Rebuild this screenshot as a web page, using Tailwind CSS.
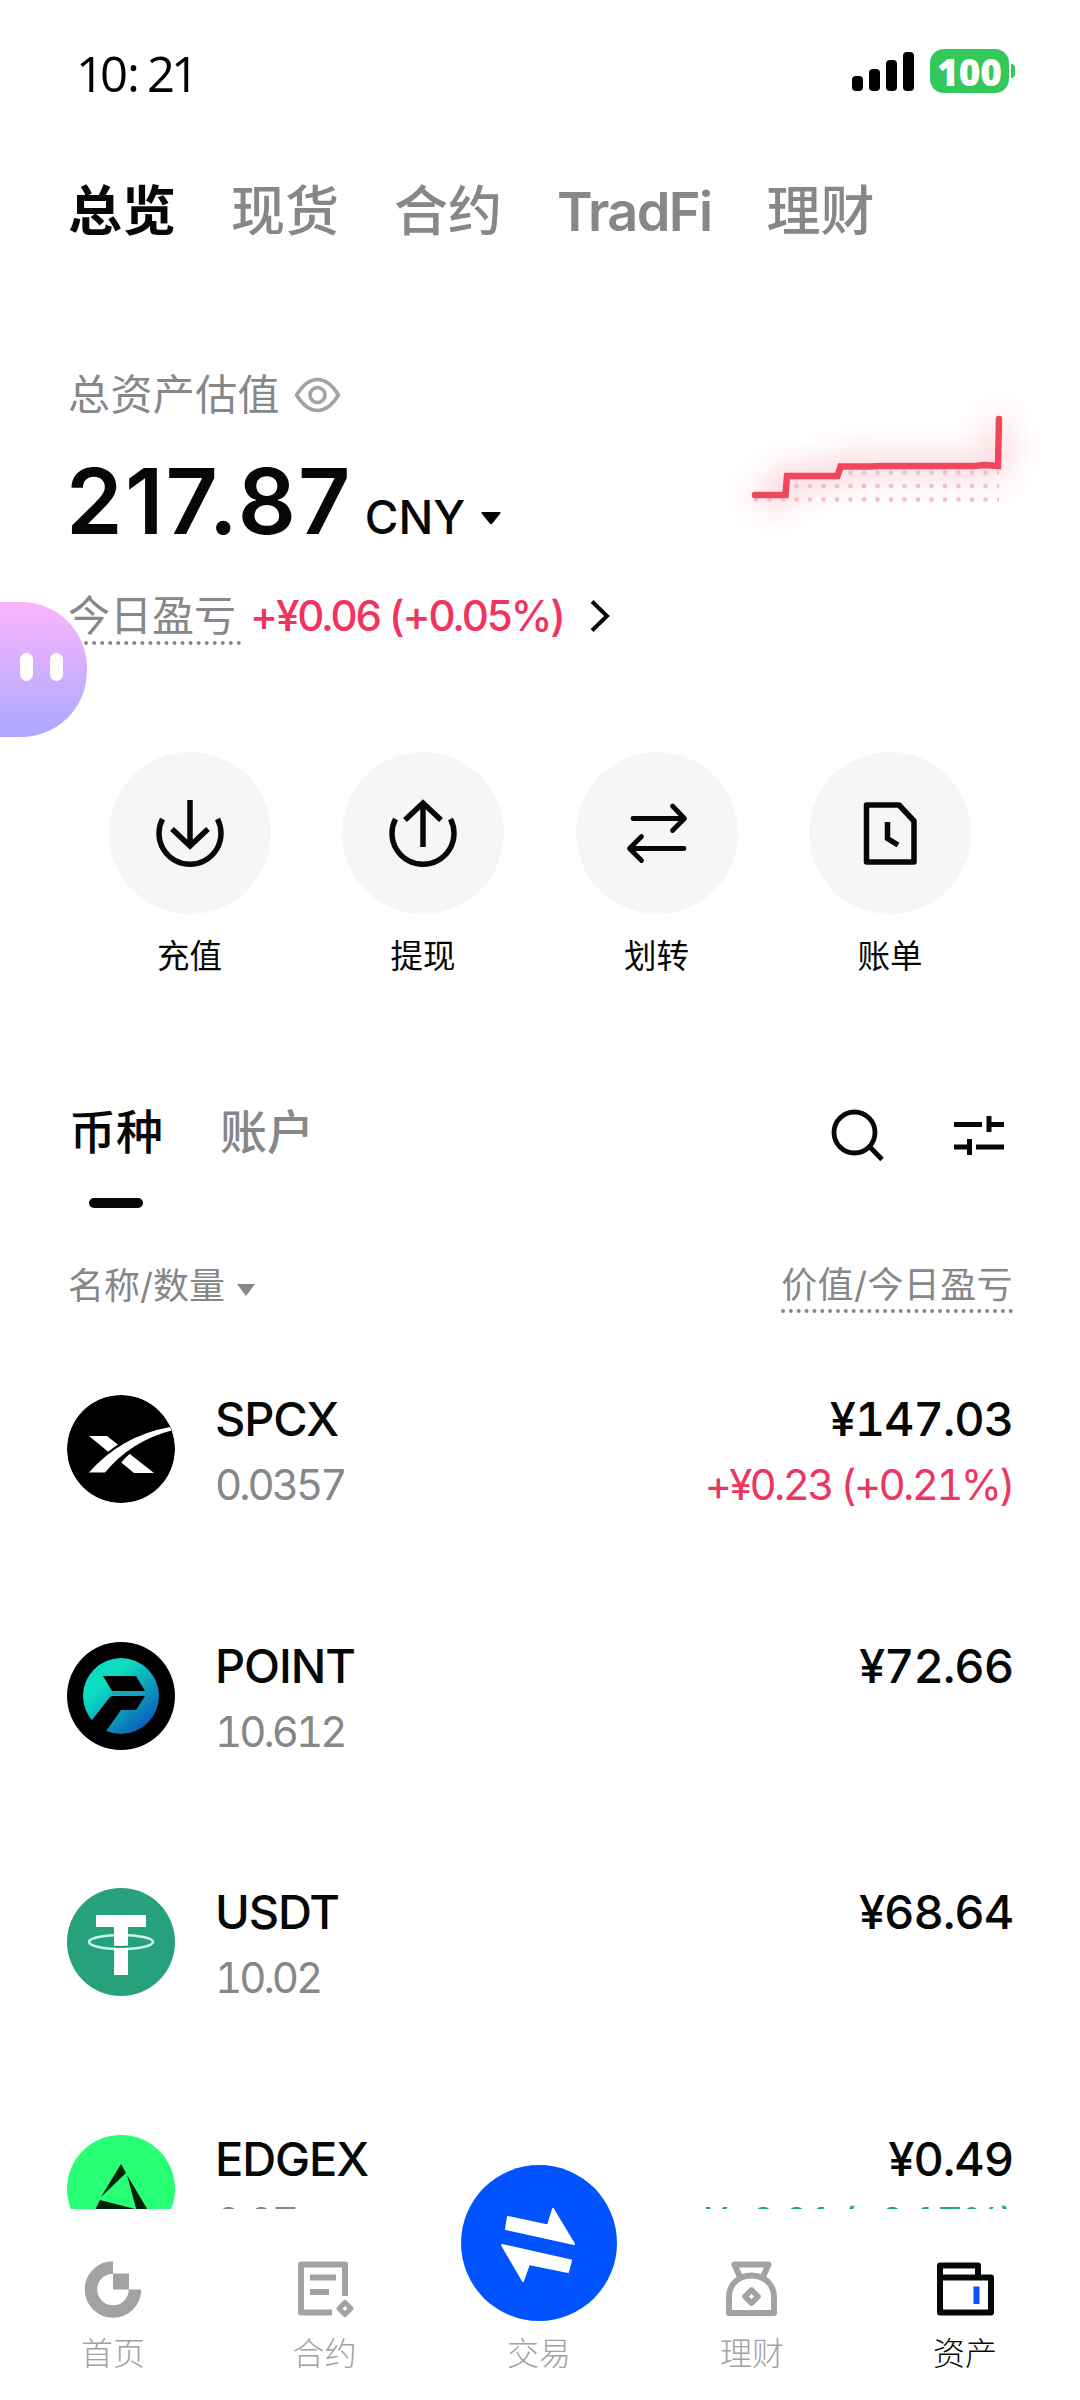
<!DOCTYPE html>
<html lang="zh-CN">
<head>
<meta charset="utf-8">
<title>资产</title>
<script src="https://cdn.jsdelivr.net/npm/@tailwindcss/browser@4"></script>
</head>
<body class="bg-white">
<div class="relative flex h-[2400px] w-[1080px] flex-col overflow-hidden bg-white font-['Inter','Noto_Sans_CJK_SC',sans-serif] text-[#060808]">

  <!-- Status bar -->
  <header class="flex h-[142px] shrink-0 items-center justify-between pl-[76px] pr-[65px]">
    <span class="pt-[4px] font-['Open_Sans','Noto_Sans',sans-serif] text-[49px] leading-[60px] tracking-[-4px] text-black">10<span class="ml-[3px]">:</span><span class="ml-[11px]">21</span></span>
    <div class="flex items-center gap-[15px]">
      <svg class="h-[39px] w-[63px]" viewBox="0 0 63 39"><g fill="#000"><rect x="0" y="24" width="11" height="15" rx="4"/><rect x="17" y="17" width="11" height="22" rx="4"/><rect x="34" y="8" width="11" height="31" rx="4"/><rect x="51" y="0" width="11" height="39" rx="4"/></g></svg>
      <div class="flex items-center gap-[2px]">
        <span class="flex h-[44px] w-[79px] items-center justify-center rounded-[14px] bg-[#34c759] font-['Open_Sans',sans-serif] text-[37px] leading-none font-extrabold text-white">100</span>
        <span class="h-[14px] w-[4px] rounded-r-full bg-[#34c759]"></span>
      </div>
    </div>
  </header>

  <!-- Account tabs -->
  <nav class="flex h-[136px] shrink-0 items-center gap-[55px] pt-[3px] pl-[68px] text-[54px] leading-none font-medium text-[#858789]">
    <span class="font-bold text-[#060808]">总览</span>
    <span>现货</span>
    <span>合约</span>
    <span class="font-semibold tracking-[-1.600px]">TradFi</span>
    <span>理财</span>
  </nav>

  <!-- Total balance -->
  <section class="flex h-[474px] shrink-0 justify-between pl-[68px] pt-[92px]">
    <div class="flex flex-col">
      <div class="flex h-[50px] items-center gap-[14px] text-[42px] leading-none tracking-[0.400px] text-[#858789]">
        <span>总资产估值</span>
        <svg class="h-[36px] w-[47px]" viewBox="0 0 47 36" fill="none" stroke="#a1a3a5" stroke-width="3.6"><path d="M2.5 18C8 9 15 2.5 23.500 2.500S39 9 44.500 18C39 27 32 33.500 23.500 33.500S8 27 2.500 18Z" stroke-linejoin="round"/><circle cx="23.500" cy="18" r="7.500"/></svg>
      </div>
      <div class="mt-[35px] flex h-[92px] items-baseline">
        <span class="-ml-[2px] text-[91px] leading-[92px] font-semibold tracking-[2.200px]">217.87</span>
        <span class="ml-[12px] text-[46px] leading-none font-medium">CNY</span>
        <svg class="ml-[16px] h-[22px] w-[20px]" viewBox="0 0 20 22"><path d="M1.500 0h17q2 0 .8 1.600l-8 10q-1.300 1.500-2.600 0l-8-10Q-.5 0 1.500 0Z"/></svg>
      </div>
      <div class="mt-[36px] flex h-[62px] items-center">
        <span class="flex h-[62px] w-[173px] items-center border-b-[4px] border-dotted border-[#858789] pt-[8px] text-[42px] leading-none text-[#858789]">今日盈亏</span>
        <span class="ml-[9px] pt-[3px] text-[42px] leading-none font-medium tracking-[-2.100px] text-[#f0345e]">+¥0.06 (+0.05%)</span>
        <svg class="mt-[3px] ml-[25px] h-[32px] w-[22px]" viewBox="0 0 22 32" fill="none" stroke="#060808" stroke-width="4"><path d="M3 1.500 18 16 3 30.500"/></svg>
      </div>
    </div>
    <svg class="h-[180px] w-[380px]" viewBox="700 370 380 180" fill="none">
      <defs>
        <filter id="glow" x="-30%" y="-80%" width="160%" height="260%"><feGaussianBlur stdDeviation="15"/></filter>
        <pattern id="dots" x="789.750" y="479.250" width="13.500" height="13.500" patternUnits="userSpaceOnUse"><circle cx="6.750" cy="6.750" r="2.400" fill="#f4bdc8"/></pattern>
      </defs>
      <path d="M755 495H785L787 476H837L840 466H998L999 420" stroke="#f0455e" stroke-opacity=".28" stroke-width="18" filter="url(#glow)"/>
      <path d="M754 495H785L787 476H837L840 466H999V505H754Z" fill="url(#dots)"/>
      <path d="M755 495H785.500L787 476H837.500L840.500 466.500H870L880 466H975L984 465L998 466L999 419" stroke="#ee475e" stroke-width="6.500" stroke-linecap="round"/>
    </svg>
  </section>

  <!-- Quick actions -->
  <section class="flex h-[322px] shrink-0 gap-[71.500px] pl-[108.500px]">
    <div class="flex w-[162px] flex-col items-center gap-[25px]">
      <span class="flex size-[162px] items-center justify-center rounded-full bg-[#f4f6f8]"><svg class="size-[80px]" viewBox="0 0 80 80" fill="none" stroke="#060808" stroke-width="5.500"><path d="M40 7V53M22 36 40 53 58 36M12.500 26A31 31 0 1 0 67.500 26"/></svg></span>
      <span class="text-[32.500px] leading-[36px]">充值</span>
    </div>
    <div class="flex w-[162px] flex-col items-center gap-[25px]">
      <span class="flex size-[162px] items-center justify-center rounded-full bg-[#f4f6f8]"><svg class="size-[80px]" viewBox="0 0 80 80" fill="none" stroke="#060808" stroke-width="5.500"><path d="M40 54V9M22 27 40 10 58 27M12.500 26A31 31 0 1 0 67.500 26"/></svg></span>
      <span class="text-[32.500px] leading-[36px]">提现</span>
    </div>
    <div class="flex w-[162px] flex-col items-center gap-[25px]">
      <span class="flex size-[162px] items-center justify-center rounded-full bg-[#f4f6f8]"><svg class="size-[80px]" viewBox="0 0 80 80" fill="none" stroke="#060808" stroke-width="4.800" stroke-linecap="round" stroke-linejoin="round"><path d="M16 25.500H67M55.500 13 67.500 25.500 55.500 37.500M67 55.500H13M24.500 43.500 12.500 55.500 24.500 67.500"/></svg></span>
      <span class="text-[32.500px] leading-[36px]">划转</span>
    </div>
    <div class="flex w-[162px] flex-col items-center gap-[25px]">
      <span class="flex size-[162px] items-center justify-center rounded-full bg-[#f4f6f8]"><svg class="size-[80px]" viewBox="0 0 80 80" fill="none" stroke="#060808" stroke-width="5.500" stroke-linejoin="round"><path d="M16.500 12H49L64 28V69H16.500Z"/><path d="M37.500 29V45.500L48 52" stroke-linejoin="miter"/></svg></span>
      <span class="text-[32.500px] leading-[36px]">账单</span>
    </div>
  </section>

  <!-- Coin / account switch -->
  <section class="flex h-[148px] shrink-0 justify-between pl-[69px] pr-[76px] pt-[32px]">
    <div class="flex items-start gap-[57px] text-[47px] leading-[52px] font-medium">
      <div class="flex flex-col items-center">
        <span>币种</span>
        <span class="mt-[40px] h-[10px] w-[54px] rounded-full bg-[#060808]"></span>
      </div>
      <span class="text-[#858789]">账户</span>
    </div>
    <div class="flex h-[57px] items-center gap-[70px]">
      <svg class="h-[54px] w-[54px]" viewBox="0 0 54 54" fill="none" stroke="#060808" stroke-width="4.800"><circle cx="24.500" cy="24.500" r="20.500"/><path d="M39 38 52 51.500"/></svg>
      <svg class="h-[42px] w-[50px]" viewBox="0 0 50 42" fill="none" stroke="#060808" stroke-width="5"><path d="M0 10.500H28M35 2V18M35 10.500H50M0 33H15M15.500 25V41M22 33H50"/></svg>
    </div>
  </section>

  <!-- Column headings -->
  <section class="flex h-[160px] shrink-0 items-start justify-between pl-[68px] pr-[67px] pt-[37px] text-[36px] leading-[54px] text-[#858789]">
    <div class="flex items-center gap-[12px]">
      <span>名称/数量</span>
      <svg class="mt-[8px] h-[12px] w-[18px]" viewBox="0 0 18 12" fill="#858789"><path d="M0 0H18L9 12Z"/></svg>
    </div>
    <span class="h-[54px] border-b-[4px] border-dotted border-[#858789] leading-[53px] tracking-[0.400px]">价值/今日盈亏</span>
  </section>

  <!-- Coin list -->
  <main class="flex h-[827px] shrink-0 flex-col overflow-hidden pl-[67px] pr-[67px] tabular-nums">
    <div class="flex h-[246.500px] shrink-0">
      <svg class="mt-[13px] size-[108px] rounded-full" viewBox="0 0 108 108"><circle cx="54" cy="54" r="54"/><path fill="#fff" d="M22 41H40L87 78H67Z"/><path d="M18 79Q52 38 108 27V36Q66 46 46 79Z"/><path fill="#fff" d="M22 77.500Q54 41 103 32L104.500 35.500Q64 46 38 77.500Z"/></svg>
      <div class="ml-[40px] flex flex-1 flex-col">
        <div class="mt-[11px] flex justify-between text-[47px] leading-[52px] font-medium tracking-[-1.100px]"><span>SPCX</span><span>¥147.03</span></div>
        <div class="mt-[14px] flex justify-between text-[42px] leading-[52px] tracking-[-2.700px]"><span class="tracking-[-3px] text-[#858789]">0.0357</span><span class="text-[#ec365f]">+¥0.23 (+0.21%)</span></div>
      </div>
    </div>
    <div class="flex h-[246.500px] shrink-0">
      <svg class="mt-[13px] size-[108px]" viewBox="0 0 108 108"><defs><linearGradient id="pt" x1=".2" y1=".15" x2=".85" y2=".9"><stop offset=".2" stop-color="#0cdcc0"/><stop offset="1" stop-color="#0b5cba"/></linearGradient></defs><circle cx="54" cy="54" r="54"/><circle cx="54" cy="54" r="38" fill="url(#pt)"/><path d="M36 34H69L78 49H45ZM45 54H78L69 68H54L37 92L22 82L43 55Z"/><path d="M45 51.500H78" stroke="#14a5bf" stroke-width="2.500"/></svg>
      <div class="ml-[40px] flex flex-1 flex-col">
        <div class="mt-[11px] flex justify-between text-[47px] leading-[52px] font-medium tracking-[-1.100px]"><span>POINT</span><span>¥72.66</span></div>
        <div class="mt-[14px] text-[42px] leading-[52px] tracking-[-3px] text-[#858789]">10.612</div>
      </div>
    </div>
    <div class="flex h-[246.500px] shrink-0">
      <svg class="mt-[13px] size-[108px]" viewBox="0 0 108 108"><circle cx="54" cy="54" r="54" fill="#26a17b"/><ellipse cx="54" cy="54" rx="32" ry="7" fill="none" stroke="#c5fbe8" stroke-width="2.600"/><path fill="#fff" d="M29 27H79V39H61V87H47V39H29Z"/><path d="M47 58.500Q54 59.500 61 58.500" fill="none" stroke="#26a17b" stroke-width="2"/></svg>
      <div class="ml-[40px] flex flex-1 flex-col">
        <div class="mt-[11px] flex justify-between text-[47px] leading-[52px] font-medium tracking-[-1.100px]"><span>USDT</span><span>¥68.64</span></div>
        <div class="mt-[14px] text-[42px] leading-[52px] tracking-[-3px] text-[#858789]">10.02</div>
      </div>
    </div>
    <div class="flex h-[246.500px] shrink-0">
      <svg class="mt-[13px] size-[108px]" viewBox="0 0 108 108"><circle cx="54" cy="54" r="54" fill="#27ff74"/><path fill="#04210e" d="M54 29 59 38 34 62ZM60 40 82 77H70ZM33 65 68 74 27 77Z"/></svg>
      <div class="ml-[40px] flex flex-1 flex-col">
        <div class="mt-[11px] flex justify-between text-[47px] leading-[52px] font-medium tracking-[-1.100px]"><span>EDGEX</span><span>¥0.49</span></div>
        <div class="mt-[12px] flex justify-between text-[42px] leading-[52px] tracking-[-2.700px]"><span class="tracking-[-3px] text-[#858789]">0.07</span><span class="text-[#1fa87c]">¥-0.01 (-0.17%)</span></div>
      </div>
    </div>
  </main>

  <!-- Bottom navigation -->
  <footer class="flex h-[191px] shrink-0 justify-between bg-white pl-[49px] pr-[51px] text-[32px] leading-[36px] font-light text-[#a0a2a4]">
    <div class="flex w-[128px] flex-col items-center pt-[50px]">
      <svg class="h-[60px] w-[60px]" viewBox="0 0 60 60"><path d="M30 8.500A22 22 0 1 0 52 30.500" fill="none" stroke="#a0a2a4" stroke-width="12.500"/><path fill="#a0a2a4" d="M30 14.500H46V30.500H30Z"/></svg>
      <span class="mt-[17px]">首页</span>
    </div>
    <div class="flex w-[128px] flex-col items-center pr-[3px] pt-[50px]">
      <svg class="h-[60px] w-[60px]" viewBox="2 0 60 60" fill="none" stroke="#a0a2a4" stroke-width="6"><path stroke-linejoin="round" d="M39 53.500H8V5.500H52V37"/><path d="M17 18.500H43M17 33H36"/><path stroke-width="5" stroke-linejoin="round" d="M52 43.500 58 49.500 52 55.500 46 49.500Z"/></svg>
      <span class="mt-[17px]">合约</span>
    </div>
    <div class="relative flex w-[128px] flex-col items-center pt-[127px]">
      <svg class="absolute -top-[44px] -left-[14px] size-[156px]" viewBox="0 0 156 156"><circle cx="78" cy="78" r="78" fill="#0053ff"/><g fill="#fff" stroke="#fff" stroke-width="2" stroke-linejoin="round"><path d="M47 52 87 60.500 92 44 113 79 45 64Z"/><path d="M41 80 110 95.500 107 107 68 99 62 116Z"/></g></svg>
      <span>交易</span>
    </div>
    <div class="flex w-[128px] flex-col items-center pt-[50px]">
      <svg class="h-[60px] w-[60px]" viewBox="0 0 60 60" fill="none" stroke="#a0a2a4" stroke-width="6" stroke-linejoin="round"><path d="M18 18 12.500 5.500H46.500L41 18"/><path d="M7 54V38C7 25 17 16.500 29.500 16.500S52 25 52 38V54Z"/><path stroke-width="5.500" d="M29.500 31 36 37.500 29.500 44 23 37.500Z"/></svg>
      <span class="mt-[17px]">理财</span>
    </div>
    <div class="flex w-[128px] flex-col items-center pt-[50px] text-[#060808]">
      <svg class="h-[60px] w-[60px]" viewBox="0 0 60 60" fill="none" stroke="#060808" stroke-width="6" stroke-linejoin="round"><path d="M5 19V6.500H43V18M5 18.500H56V53.500H5Z"/><path stroke="#0b53f5" d="M41.500 27.500V45"/></svg>
      <span class="mt-[17px]">资产</span>
    </div>
  </footer>

  <!-- Floating assistant -->
  <div class="absolute top-[602px] left-0 flex h-[135px] w-[87px] items-start gap-[17px] rounded-r-[66px] bg-linear-to-b from-[#fbb4fd] to-[#a9a8ff] pt-[51px] pl-[20px]">
    <span class="h-[28px] w-[13px] rounded-full bg-white"></span>
    <span class="h-[28px] w-[13px] rounded-full bg-white"></span>
  </div>
</div>
</body>
</html>
